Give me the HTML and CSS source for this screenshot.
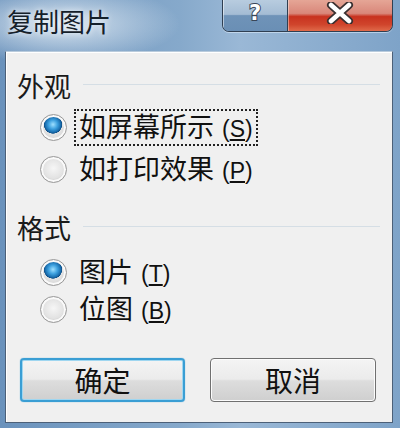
FILE: index.html
```html
<!DOCTYPE html>
<html>
<head>
<meta charset="utf-8">
<link rel="stylesheet" href="styles.css">
</head>
<body>
<div class="window">
  <div class="titlebar">
    <div class="title">复制图片</div>
    <div class="caption-buttons">
      <div class="cbtn help"><span class="qmark">?</span></div>
      <div class="cbtn close">
        <svg width="34" height="22" viewBox="0 0 34 22">
          <path d="M8 3 L26 19 M26 3 L8 19" stroke="#3a3030" stroke-width="8" stroke-linecap="round"/>
          <path d="M8 3 L26 19 M26 3 L8 19" stroke="#ffffff" stroke-width="4.5" stroke-linecap="round"/>
        </svg>
      </div>
    </div>
  </div>
  <div class="client">
    <div class="group">
      <div class="group-head"><span class="group-label">外观</span><span class="group-line"></span></div>
      <div class="row first">
        <span class="radio checked"></span>
        <span class="rlabel focus">如屏幕所示<span class="acc">(<u>S</u>)</span></span>
      </div>
      <div class="row second">
        <span class="radio"></span>
        <span class="rlabel">如打印效果<span class="acc">(<u>P</u>)</span></span>
      </div>
    </div>
    <div class="group g2">
      <div class="group-head"><span class="group-label">格式</span><span class="group-line"></span></div>
      <div class="row first">
        <span class="radio checked"></span>
        <span class="rlabel">图片<span class="acc">(<u>T</u>)</span></span>
      </div>
      <div class="row second tight">
        <span class="radio"></span>
        <span class="rlabel">位图<span class="acc">(<u>B</u>)</span></span>
      </div>
    </div>
    <div class="buttons">
      <div class="btn default">确定</div>
      <div class="btn">取消</div>
    </div>
  </div>
</div>
</body>
</html>
```
FILE: styles.css
```css
* { box-sizing: border-box; }
html, body { margin: 0; padding: 0; }
body {
  width: 400px;
  height: 428px;
  overflow: hidden;
  font-family: "Noto Sans CJK SC", "Noto Sans", sans-serif;
}
.window {
  width: 400px;
  height: 428px;
  display: flex;
  flex-direction: column;
  background:
    radial-gradient(ellipse 120px 40px at 60px 24px, rgba(235,242,248,0.85), rgba(235,242,248,0) 100%),
    linear-gradient(90deg, #6a92bc 0%, #86a9cb 45%, #9ab8d6 60%, #7ea3c8 100%);
}
.titlebar {
  height: 51px;
  display: flex;
  align-items: flex-start;
  flex: none;
}
.title {
  padding: 6px 0 0 7px;
  font-size: 26px;
  line-height: 30px;
  color: #15202a;
  text-shadow: 0 0 6px rgba(255,255,255,0.9);
}
.caption-buttons {
  margin-left: auto;
  margin-right: 7px;
  display: flex;
  height: 33px;
  margin-top: -1px;
  border: 1px solid #2f3f52;
  border-top: none;
  border-radius: 0 0 7px 7px;
  overflow: hidden;
  box-shadow: 0 1px 0 rgba(220,235,250,0.6);
}
.cbtn {
  height: 100%;
  display: flex;
  align-items: center;
  justify-content: center;
}
.help {
  width: 65px;
  border-right: 1px solid #2f3f52;
  background: linear-gradient(180deg, #b9cde0 0%, #a4bcd4 48%, #6f93b8 52%, #6a8fb5 100%);
  box-shadow: inset 1px 1px 0 rgba(255,255,255,0.5);
}
.qmark {
  font-family: "DejaVu Sans", sans-serif;
  font-weight: bold;
  font-size: 21px;
  line-height: 22px;
  color: #fff;
  -webkit-text-stroke: 2px #3a4658;
  paint-order: stroke fill;
  margin-top: -4px;
}
.close {
  width: 104px;
  background: linear-gradient(180deg, #e6a898 0%, #d9877a 45%, #c8321f 55%, #d0452c 80%, #e06a4a 100%);
  box-shadow: inset 1px 1px 0 rgba(255,255,255,0.4);
}
.close svg { margin-top: -4px; }
.client {
  margin: 0 7px 5px 5px;
  flex: 1;
  background: #f0f0f0;
  border: 1px solid #4c6078;
  border-top-color: #b9cbdc;
  box-shadow: inset 1px 1px 0 #ffffff;
  padding: 19px 0 0 0;
  display: flex;
  flex-direction: column;
}
.group-head {
  display: flex;
  align-items: center;
  height: 30px;
  padding-left: 11px;
  padding-right: 12px;
}
.group-label {
  font-size: 27px;
  line-height: 30px;
  color: #1a1a1a;
}
.group-line {
  flex: 1;
  height: 1px;
  margin-left: 12px;
  margin-top: -4px;
  background: #d5dee5;
}
.row {
  display: flex;
  align-items: center;
  height: 36px;
  padding-left: 34px;
}
.row.first { margin-top: 8px; }
.row.second { margin-top: 6px; }
.row.second.tight { margin-top: 1px; }
.g2 { margin-top: 26px; }
.g2 .row.first { margin-top: 11px; }
.radio {
  width: 27px;
  height: 27px;
  border-radius: 50%;
  flex: none;
  background: radial-gradient(circle at 50% 45%, #f6f6f6 0%, #e2e2e2 55%, #d6d6d6 62%, #c4c4c4 100%);
  border: 1px solid #9a9a9a;
  box-shadow: inset 0 0 0 2px #fafafa;
}
.radio.checked {
  background:
    radial-gradient(circle at 48% 38%, #9fe0ff 0%, #3ea1df 22%, #1a6fb0 38%, #0f4f86 44%, rgba(0,0,0,0) 46%),
    radial-gradient(circle at 50% 45%, #f6f6f6 0%, #dcdcdc 60%, #c4c4c4 100%);
}
.rlabel {
  margin-left: 7px;
  font-size: 27px;
  line-height: 30px;
  padding: 0 3px;
  color: #111;
  border: 2px dotted transparent;
  white-space: nowrap;
}
.rlabel.focus {
  border-color: #222;
}
.acc {
  font-family: "Liberation Sans", sans-serif;
  font-size: 23px;
  margin-left: 8px;
}
.acc u { text-underline-offset: 2px; }
.buttons {
  display: flex;
  gap: 25px;
  padding-left: 14px;
  margin-top: 31px;
}
.btn {
  width: 166px;
  height: 44px;
  border: 1px solid #707070;
  border-radius: 4px;
  background: linear-gradient(180deg, #f4f4f4 0%, #ebebeb 48%, #dddddd 52%, #cfcfcf 100%);
  box-shadow: inset 0 0 0 1px #fcfcfc;
  display: flex;
  align-items: center;
  justify-content: center;
  font-size: 28px;
  color: #111;
}
.btn.default {
  width: 165px;
  border: 2px solid #3a9ed4;
  box-shadow: inset 0 0 0 1px #9fd6f0, 0 0 1px #3a9ed4;
}
```
